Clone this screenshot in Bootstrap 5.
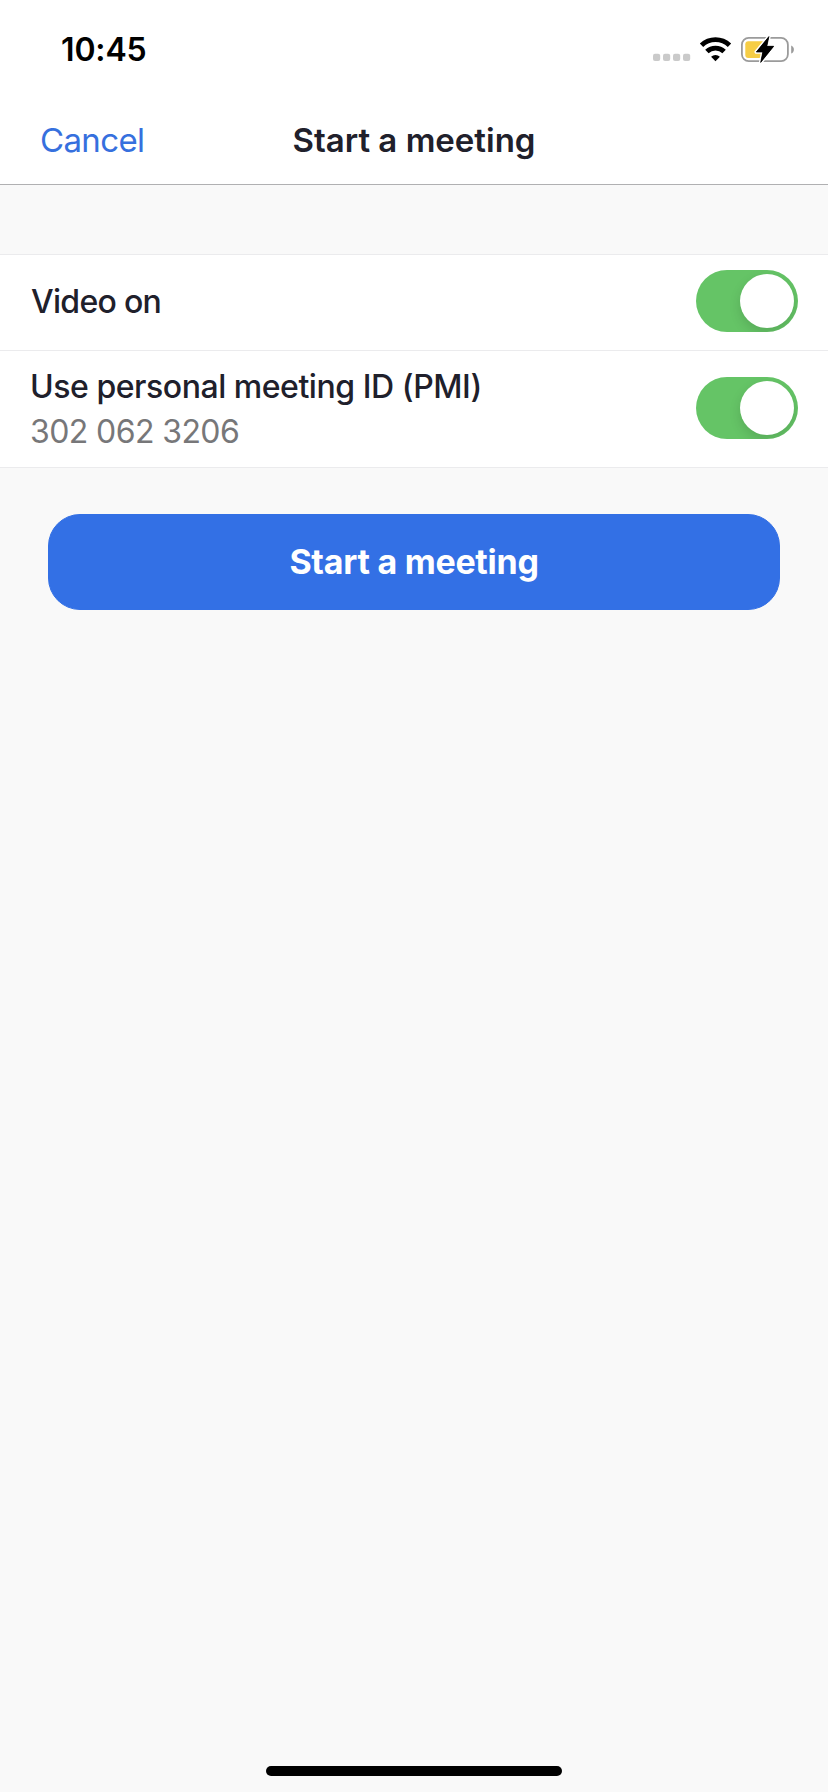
<!DOCTYPE html>
<html lang="en">
<head>
<meta charset="utf-8">
<meta name="viewport" content="width=device-width, initial-scale=1">
<title>Start a meeting</title>
<link href="https://cdn.jsdelivr.net/npm/bootstrap@5.3.0/dist/css/bootstrap.min.css" rel="stylesheet">
<style>
body{font-family:Inter,"Liberation Sans",sans-serif;background:#f9f9f9;color:#20202b;height:1792px;overflow:hidden}
.top-area{height:185px;border-bottom:1px solid #b0b0b2}
.status-bar{height:99px;padding:0 32px 0 61px}
.clock{font-size:32px;font-weight:600;color:#000;letter-spacing:-.15px}
.title-bar{height:82px;padding:0 40px;display:grid;grid-template-columns:1fr auto 1fr;align-items:center;font-size:33px;line-height:40px}
.cancel-link{color:#3670de;letter-spacing:-.65px}
.options{margin-top:69px;border-top:1px solid #ebebed;border-bottom:1px solid #ebebed}
.option{padding:0 30px 3px 30px;height:95px}
.option+.option{height:117px;padding-bottom:2px;border-top:1px solid #ebebed}
.label-text{font-size:32px;line-height:45px;font-weight:500;letter-spacing:-.46px}
.label-short{letter-spacing:-.7px;padding-left:1px}
.pmi{font-size:32px;line-height:45px;color:#777779;letter-spacing:-.6px}
.pmi-block{padding-top:2px}
.toggle{width:102px;height:62px;background:#65c466;padding:4px}
.knob{width:54px;height:54px;box-shadow:0 5px 12px rgba(0,0,0,.13)}
.start-btn{margin:46px 48px 0;height:96px;padding:0 0 2px;border-radius:32px;font-size:34px;font-weight:700;letter-spacing:-.27px;--bs-btn-bg:#3370e5;--bs-btn-border-color:#3370e5}
.home-bar{width:296px;height:10px;margin-bottom:16px}
</style>
</head>
<body class="d-flex flex-column">
<header class="top-area bg-white flex-shrink-0">
  <div class="status-bar d-flex justify-content-between align-items-center">
    <span class="clock">10:45</span>
    <svg width="144" height="27" viewBox="652 36 144 27" overflow="visible" aria-hidden="true">
      <g fill="#cacaca"><rect x="653" y="53.8" width="7.200" height="7.200" rx="2"/><rect x="663" y="53.800" width="7.200" height="7.200" rx="2"/><rect x="673" y="53.800" width="7.200" height="7.200" rx="2"/><rect x="683" y="53.800" width="7.200" height="7.200" rx="2"/></g>
      <g fill="none" stroke="#000" stroke-width="4.900"><path d="M701.500 45.200A20.300 20.300 0 0 1 729.500 45.200"/><path d="M706.900 51.600A12.400 12.400 0 0 1 724.100 51.600"/></g>
      <path d="M711.100 56.700a6.500 6.500 0 0 1 8.800 0L715.500 61.200z"/>
      <rect x="741.900" y="37.900" width="46" height="23.200" rx="6.800" fill="none" stroke="#9b9b9b" stroke-width="1.800"/>
      <rect x="745.300" y="41.200" width="20" height="16.700" rx="3" fill="#f6cd45"/>
      <path d="M768.900 36.600L756.300 52h6.500L760.700 62.400L773.700 46.300h-6.900z" fill="#000" stroke="#fff" stroke-width="3.600" stroke-linejoin="round" paint-order="stroke"/>
      <path d="M768.900 36.600L756.300 52h6.500L760.700 62.400L773.700 46.300h-6.900z" stroke="#000" stroke-width=".7" stroke-linejoin="round"/>
      <path d="M791.200 45.400c3.600 1.500 3.600 6.700 0 8.200z" fill="#9b9b9b"/>
    </svg>
  </div>
  <nav class="title-bar">
    <a class="cancel-link text-decoration-none" href="#">Cancel</a>
    <span class="fw-semibold">Start a meeting</span>
  </nav>
</header>
<main class="flex-grow-1 d-flex flex-column">
  <section class="options bg-white">
    <div class="option d-flex align-items-center justify-content-between">
      <span class="label-text label-short">Video on</span>
      <div class="toggle rounded-pill overflow-hidden d-flex justify-content-end" role="switch" aria-checked="true"><div class="knob bg-white rounded-circle"></div></div>
    </div>
    <div class="option d-flex align-items-center justify-content-between">
      <div class="pmi-block"><div class="label-text">Use personal meeting ID (PMI)</div><div class="pmi">302 062 3206</div></div>
      <div class="toggle rounded-pill overflow-hidden d-flex justify-content-end" role="switch" aria-checked="true"><div class="knob bg-white rounded-circle"></div></div>
    </div>
  </section>
  <button class="start-btn btn btn-primary" type="button">Start a meeting</button>
</main>
<div class="home-bar bg-black rounded-pill mx-auto"></div>
<script src="https://cdn.jsdelivr.net/npm/bootstrap@5.3.0/dist/js/bootstrap.bundle.min.js"></script>
</body>
</html>
